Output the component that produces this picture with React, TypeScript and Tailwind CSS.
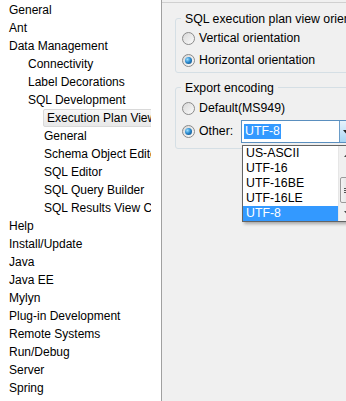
import React from "react";

type TreeItem = { label: string; level: number; selected?: boolean };

const treeItems: TreeItem[] = [
  { label: "General", level: 0 },
  { label: "Ant", level: 0 },
  { label: "Data Management", level: 0 },
  { label: "Connectivity", level: 1 },
  { label: "Label Decorations", level: 1 },
  { label: "SQL Development", level: 1 },
  { label: "Execution Plan View", level: 2, selected: true },
  { label: "General", level: 2 },
  { label: "Schema Object Editor", level: 2 },
  { label: "SQL Editor", level: 2 },
  { label: "SQL Query Builder", level: 2 },
  { label: "SQL Results View Configuration", level: 2 },
  { label: "Help", level: 0 },
  { label: "Install/Update", level: 0 },
  { label: "Java", level: 0 },
  { label: "Java EE", level: 0 },
  { label: "Mylyn", level: 0 },
  { label: "Plug-in Development", level: 0 },
  { label: "Remote Systems", level: 0 },
  { label: "Run/Debug", level: 0 },
  { label: "Server", level: 0 },
  { label: "Spring", level: 0 },
];

const encodings = ["US-ASCII", "UTF-16", "UTF-16BE", "UTF-16LE", "UTF-8"];

const indent = ["pl-[8px]", "pl-[27px]", "pl-[43px]"];

const Radio = ({ checked, label }: { checked?: boolean; label: string }) => (
  <div className="flex items-center h-[22px]">
    <div className="w-[13px] h-[13px] rounded-full border border-[#8a8a8a] bg-gradient-to-br from-[#d8d8d8] to-[#fbfbfb] flex items-center justify-center shrink-0">
      {checked && (
        <div className="w-[7px] h-[7px] rounded-full bg-[radial-gradient(circle_at_35%_35%,#9fe0ff_0%,#2b8bd0_45%,#0d3f6e_100%)]" />
      )}
    </div>
    <span className="ml-[4px] whitespace-nowrap">{label}</span>
  </div>
);

const GroupBox = ({
  title,
  className,
  children,
}: {
  title: string;
  className?: string;
  children: React.ReactNode;
}) => (
  <div
    className={`relative ml-[13px] w-[260px] border border-[#d5dfe5] rounded-[3px] pl-[6px] ${className ?? ""}`}
  >
    <span className="absolute left-[5px] top-[-9px] h-[18px] leading-[18px] px-[4px] bg-[#f0f0f0] whitespace-nowrap">
      {title}
    </span>
    {children}
  </div>
);

export default function App() {
  return (
    <div className="flex w-[346px] h-[401px] overflow-hidden text-[12px] text-black font-['Liberation_Sans',Arial,sans-serif]">
      {/* preference tree */}
      <div className="w-[162px] shrink-0 bg-white border-r border-[#a0a0a0] pt-[1px]">
        <div className="w-[151px] overflow-hidden">
          {treeItems.map((item, i) => (
            <div key={i} className={`h-[18px] flex items-center whitespace-nowrap ${indent[item.level]}`}>
              {item.selected ? (
                <span className="h-[18px] leading-[16px] pl-[3px] pr-[4px] border border-[#d9d9d9] rounded-[2px] bg-gradient-to-b from-[#f7f7f7] to-[#e8e8e8]">
                  {item.label}
                </span>
              ) : (
                <span className="pl-[1px]">{item.label}</span>
              )}
            </div>
          ))}
        </div>
      </div>

      {/* preference page */}
      <div className="relative flex-1 bg-[#f0f0f0] overflow-hidden text-[12.3px]">
        <div className="h-[3px] border-b border-[#d0d0d0]" />
        <GroupBox title="SQL execution plan view orientation" className="mt-[15px] pt-[8px] pb-[1px]">
          <Radio label="Vertical orientation" />
          <Radio checked label="Horizontal orientation" />
        </GroupBox>

        <GroupBox title="Export encoding" className="mt-[14px] pt-[9px] pb-[5px]">
          <Radio label="Default(MS949)" />
          <div className="flex items-center h-[23px] mt-[1px]">
            <div className="w-[60px] shrink-0">
              <Radio checked label="Other:" />
            </div>
            <div className="ml-[-1px] flex h-[23px] w-[120px] border border-[#5a8fbf] bg-white items-center">
              <span className="ml-[2px] px-[1px] h-[15px] leading-[15px] bg-[#3399ff] text-white">UTF-8</span>
              <div className="ml-[58px] w-[17px] h-full border-l border-[#6a9cc8] bg-gradient-to-b from-[#e6f3fc] to-[#a9d6f5] flex items-center pl-[3px]">
                <svg width="7" height="4" viewBox="0 0 7 4">
                  <path d="M0 0h7L3.5 4z" fill="#222" />
                </svg>
              </div>
            </div>
          </div>
        </GroupBox>

        {/* combo drop-down list */}
        <div className="absolute left-[80px] top-[145px] w-[120px] h-[77px] bg-white border border-[#646464] shadow-[2px_2px_3px_rgba(0,0,0,0.3)] flex">
          <div className="w-[95px]">
            {encodings.map((enc) => (
              <div
                key={enc}
                className={`h-[15px] leading-[15px] pl-[3px] whitespace-nowrap ${
                  enc === "UTF-8" ? "bg-[#3399ff] text-white" : ""
                }`}
              >
                {enc}
              </div>
            ))}
          </div>
          <div className="w-[17px] bg-[#f0f0f0] flex flex-col items-center border-l border-[#e6e6e6]">
            <div className="h-[17px] flex items-center">
              <svg width="7" height="4" viewBox="0 0 7 4">
                <path d="M0 4h7L3.5 0z" fill="#444" />
              </svg>
            </div>
            <div className="mt-[14px] w-[15px] h-[26px] border border-[#9a9a9a] rounded-[2px] bg-gradient-to-r from-[#f3f3f3] to-[#d8d8d8] flex flex-col items-center justify-center gap-[1px]">
              <div className="w-[6px] h-[1px] bg-[#555]" />
              <div className="w-[6px] h-[1px] bg-[#555]" />
              <div className="w-[6px] h-[1px] bg-[#555]" />
            </div>
            <div className="mt-auto h-[17px] flex items-center">
              <svg width="7" height="4" viewBox="0 0 7 4">
                <path d="M0 0h7L3.5 4z" fill="#444" />
              </svg>
            </div>
          </div>
        </div>
      </div>
    </div>
  );
}
